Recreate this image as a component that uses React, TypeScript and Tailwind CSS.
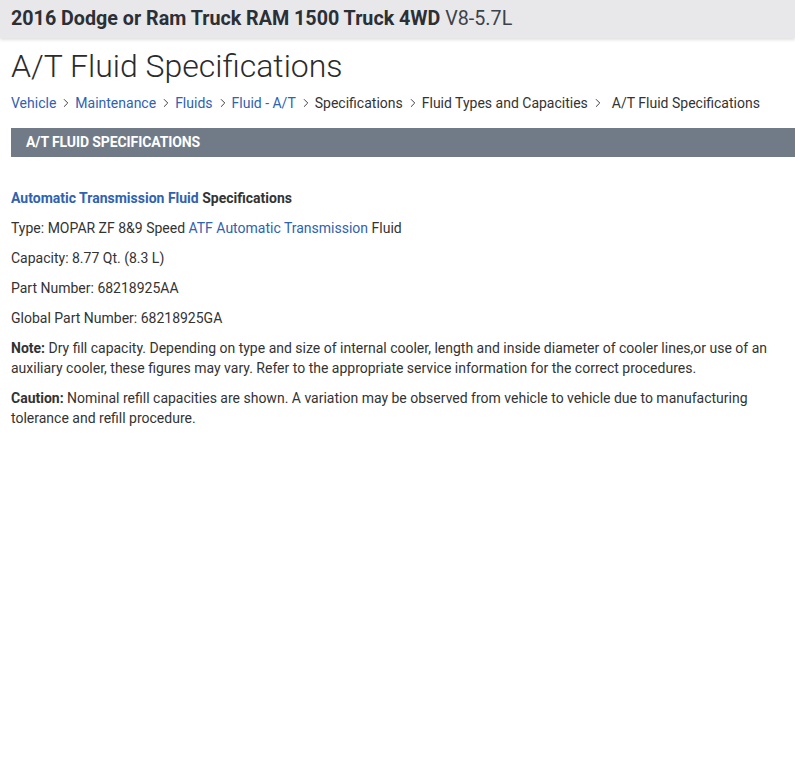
import { ChevronRight } from "lucide-react";

const crumbs = ["Vehicle", "Maintenance", "Fluids", "Fluid - A/T", "Specifications", "Fluid Types and Capacities"];

export default function App() {
    return (
        <div className="min-h-[768px] bg-white text-[#333] font-['Roboto',sans-serif]">
            <div className="h-[38px] bg-[#e8e8ea] shadow-[0_2px_3px_rgba(0,0,0,0.12)] flex items-center px-[11px]">
                <h1 className="text-[19.7px] font-bold text-[#2b2f36]">
                    2016 Dodge or Ram Truck RAM 1500 Truck 4WD <span className="font-normal text-[#3d424a]">V8-5.7L</span>
                </h1>
            </div>
            <div className="px-[11px]">
                <h2 className="text-[32px] font-light leading-[38px] mt-[9px] text-[#2b2b2b]">A/T Fluid Specifications</h2>
                <div className="flex items-center text-[14px] mt-[9px] leading-[18px]">
                    {crumbs.map((c, i) => (
                        <span key={c} className="flex items-center">
                            <span className={i < 4 ? "text-[#2f62b0]" : "text-[#333]"}>{c}</span>
                            <ChevronRight size={14} strokeWidth={1.6} className="ml-[3px] mr-[2px] text-[#333]" />
                        </span>
                    ))}
                    <span className="ml-[5px]">A/T Fluid Specifications</span>
                </div>
                <div className="mt-[16px] -mr-[11px] h-[29px] bg-[#717b88] flex items-center px-[15px]">
                    <span className="text-white text-[14px] font-bold uppercase tracking-[-0.1px]">A/T Fluid Specifications</span>
                </div>
                <div className="mt-[31px] text-[14px] leading-[20px] flex flex-col gap-[10px]">
                    <p className="font-bold"><span className="text-[#2f62b0]">Automatic Transmission Fluid</span> Specifications</p>
                    <p>Type: MOPAR ZF 8&amp;9 Speed <span className="text-[#2f62b0]">ATF Automatic Transmission</span> Fluid</p>
                    <p>Capacity: 8.77 Qt. (8.3 L)</p>
                    <p>Part Number: 68218925AA</p>
                    <p>Global Part Number: 68218925GA</p>
                    <p><b>Note:</b> Dry fill capacity. Depending on type and size of internal cooler, length and inside diameter of cooler lines,or use of an auxiliary cooler, these figures may vary. Refer to the appropriate service information for the correct procedures.</p>
                    <p><b>Caution:</b> Nominal refill capacities are shown. A variation may be observed from vehicle to vehicle due to manufacturing tolerance and refill procedure.</p>
                </div>
            </div>
        </div>
    );
}
